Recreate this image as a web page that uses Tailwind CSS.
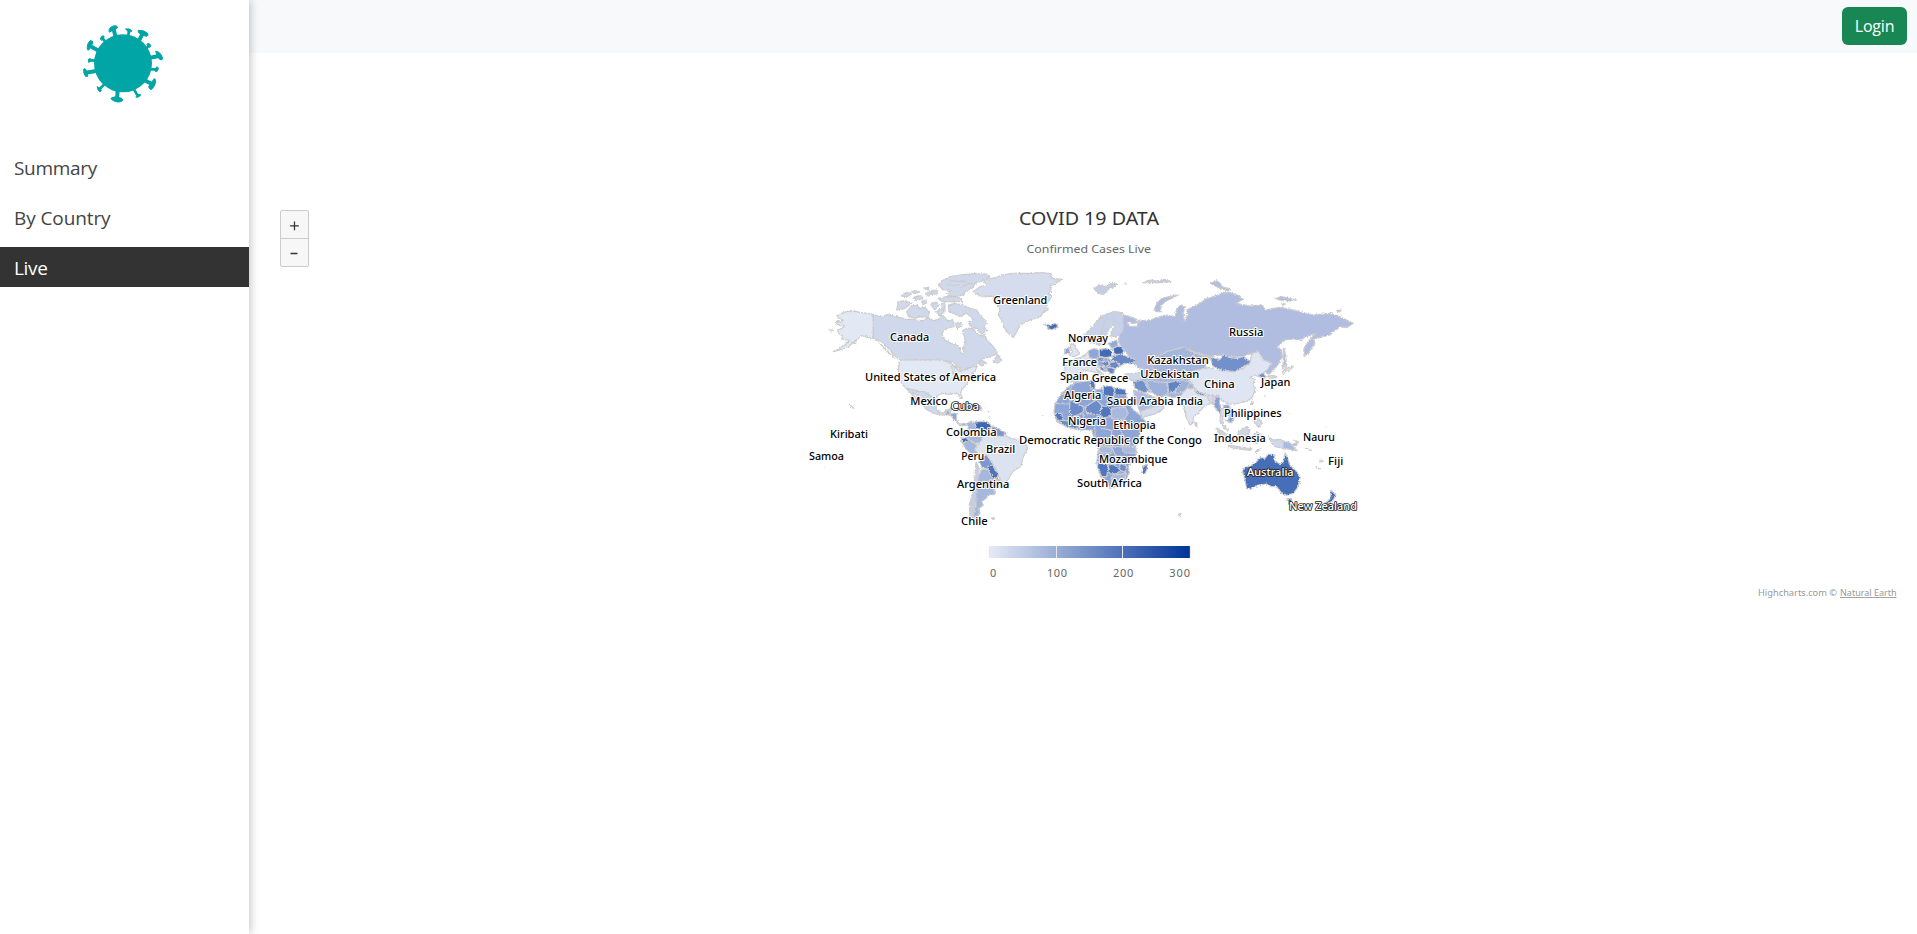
<!DOCTYPE html>
<html lang="en">
<head>
<meta charset="utf-8">
<title>Covid 19 Data</title>
<script src="https://cdn.jsdelivr.net/npm/@tailwindcss/browser@4"></script>
</head>
<body class="bg-white font-['Open_Sans',sans-serif]">
<div class="flex h-[934px] w-full overflow-hidden">
  <aside class="relative z-10 w-[249px] shrink-0 bg-white shadow-[0_0_10px_rgba(0,0,0,0.3)]">
    <div class="flex h-[147px] pt-[22px] pl-[80px]">
      <svg class="h-[84px] w-[86px]" viewBox="240 66 258 252" fill="#02a5a5" stroke="#02a5a5" stroke-linecap="round" stroke-linejoin="round">
        <circle cx="369" cy="190" r="87" stroke="none"/>
        <g fill="none" stroke-width="9">
          <path d="M346 108L341 88M419 118L428 100M292 150L270 138M450 173L477 168M284 214L257 218M438 243L458 253M353 272L351 298" stroke-width="12"/>
          <path d="M385 106L387 90M313 122L307 114M440 144L447 136M290 182L270 181M450 208L470 208M312 254L299 267M403 270L413 287" stroke-width="8"/>
        </g>
        <g stroke-width="3">
          <path d="M327 93Q327 80 344 77Q354 77 352 84Q341 90 329 96ZM415 91Q430 89 442 99Q447 108 439 109Q427 106 417 99ZM262 148Q260 130 271 122Q280 121 279 129Q271 138 267 149ZM468 154Q482 155 488 175Q488 181 480 179Q471 170 468 158ZM253 206Q259 206 259 213Q260 222 264 228Q259 232 255 227Q250 218 251 209ZM464 236Q468 237 466 250Q461 265 453 269Q446 266 446 259Q452 254 457 244ZM334 294Q345 288 356 292Q366 294 369 299Q367 306 352 306Q338 303 334 298Z"/>
          <path d="M378 87Q388 84 395 92Q395 97 388 96Q380 93 378 87ZM301 116Q304 105 312 108Q314 114 306 121ZM441 132Q447 126 452 136Q452 143 447 142ZM266 177Q271 173 274 179Q272 186 267 187ZM470 201Q476 200 475 207Q473 216 467 215ZM292 261Q299 263 304 270Q304 275 299 275Q292 270 292 261ZM408 290Q415 282 421 283Q424 288 413 292Z"/>
        </g>
      </svg>
    </div>
    <nav class="flex flex-col gap-[10px] text-[19px] leading-[42px] text-[#444]">
      <a class="h-10 pl-[14px] tracking-[-0.3px]">Summary</a>
      <a class="h-10 pl-[14px] tracking-[-0.1px]">By Country</a>
      <a class="h-10 bg-[#333] pl-[14px] font-medium tracking-[-0.3px] text-white">Live</a>
    </nav>
  </aside>

  <div class="flex min-w-0 grow flex-col">
    <header class="flex h-[53px] shrink-0 items-start justify-end bg-[#f8f9fb] pt-[7px] pr-[10px]">
      <button class="h-[38px] w-[65px] rounded-md bg-[#198754] text-base tracking-[-0.2px] text-white">Login</button>
    </header>

    <main class="relative flex flex-col items-center pl-[12px] pt-[152px] font-['Noto_Sans',sans-serif]">
      <div class="absolute left-[31px] top-[157px] flex w-[29px] flex-col rounded-[2px] border border-[#ccc] bg-[#f7f7f7]">
        <svg class="h-[28px] w-full border-b border-[#ccc]" viewBox="0 0 27 28"><path d="M9 15.500h9M13.500 11v9" stroke="#333" stroke-width="1.300"/></svg>
        <svg class="h-[27px] w-full" viewBox="0 0 27 27"><path d="M9.500 14.500h7" stroke="#333" stroke-width="1.500"/></svg>
      </div>
      <h1 class="h-[33px] whitespace-nowrap text-[#333]">
        <svg class="h-[33px] w-[260px]" viewBox="0 0 260 33"><text x="60" y="20" font-size="18" fill="#333" textLength="140" lengthAdjust="spacingAndGlyphs">COVID 19 DATA</text></svg>
      </h1>
      <h2><svg class="h-[22px] w-[260px]" viewBox="0 0 260 22"><text x="67.500" y="15" font-size="11.500" fill="#666" textLength="124.500" lengthAdjust="spacingAndGlyphs">Confirmed Cases Live</text></svg></h2>

      <svg class="ml-[-8px] block h-[327px] w-[570px]" viewBox="0 0 1710 981" font-family="'Noto Sans',sans-serif">
        <defs>
          <linearGradient id="scale"><stop offset="0" stop-color="#e6ebf5"/><stop offset="1" stop-color="#003399"/></linearGradient>
          <filter id="coast" x="0" y="0" width="100%" height="100%" color-interpolation-filters="sRGB"><feTurbulence type="fractalNoise" baseFrequency="0.2" numOctaves="2" seed="4"/><feDisplacementMap in="SourceGraphic" scale="9" xChannelSelector="R" yChannelSelector="G"/></filter>
        </defs>
        <g stroke="#ccc" stroke-width="3.500" stroke-linejoin="round" filter="url(#coast)">
          <!-- North America -->
          <path fill="#e2e9f4" d="M220 163L200 160 180 157 155 152 140 155 125 160 112 168 118 176 130 180 125 187 110 184 105 190 120 195 133 197 128 205 112 210 118 222 128 228 125 236 138 240 150 240 135 255 118 265 100 275 125 268 150 257 165 243 180 230 190 226 200 232 220 235ZM88 208l12 4-8 1ZM157 247l12-4-4 9Z"/>
          <path fill="#d0d8ec" d="M220 163L235 168 245 172 262 163 280 168 300 172 315 178 335 178 350 180 370 182 385 172 400 182 415 178 425 164 432 170 445 185 458 178 462 200 445 203 430 212 425 225 435 240 450 248 470 255 480 265 485 282 492 275 490 260 497 245 493 230 487 213 500 205 520 205 530 222 545 228 555 222 560 240 575 255 590 272 592 282 575 288 550 296 535 305 550 303 560 310 545 318 535 310 515 320 500 325 485 335 475 325 465 310 440 303 420 300 300 300 290 292 270 270 255 255 245 243 220 235ZM585 295L595 285 605 300 600 309 580 307ZM232 240l25 30 30 26"/>
          <path fill="#d0d8ec" d="M415 75L430 60 450 50 480 45 520 41 560 42 570 50 550 62 530 68 515 85 495 95 490 105 470 108 450 108 440 100 455 90 430 90ZM440 75l40 0M450 62l50 4M480 85l20-12 30-6M295 125L315 122 335 130 315 145 290 150ZM320 155L335 138 350 135 360 145 375 142 388 158 385 172 360 170 345 175 325 170ZM303 108L320 97 335 102 320 110ZM335 95l20-4 4 6-18 3ZM340 112l20-5 8 8-20 7ZM372 85l14-4-2 10ZM376 100l15-5 5 10-15 4ZM365 125l12-5 4 8-12 6ZM393 92l18-2 0 12-14 0ZM392 132l15-7 9 12-12 13ZM410 155l12-10 10 12-15 10ZM415 115l25-5 40 2 8 12-40 2-25-3ZM445 135L465 130 490 135 510 145 530 150 540 165 562 190 552 200 560 212 545 222 530 205 510 198 505 185 520 178 500 160 480 170 460 160 447 155ZM425 130l10-2 0 25-8-3ZM465 190l15-3 6 10-14 8Z"/>
          <path fill="#e2e9f4" d="M300 300L420 300 440 305 460 315 478 335 500 328 515 320 530 320 525 335 508 345 505 360 500 375 485 388 482 400 487 415 480 415 475 402 460 400 445 403 430 400 415 405 405 415 395 410 375 395 355 395 335 388 318 385 305 370 297 355 295 325ZM455 318l10 5-6 20ZM465 318l15 5-4 10Z"/>
          <path fill="#cfd9ed" d="M318 385L335 388 355 395 375 395 395 410 405 415 410 430 408 445 415 455 430 460 440 450 455 445 450 460 440 466 415 463 395 458 375 445 365 425 345 400 337 398 352 422 340 412 330 397Z"/>
          <path fill="#8fa8d8" d="M436 456l12-4 0 14-10-4ZM450 460l20 0 0 22-10-4ZM470 482l10 12 15-4 5 6-20 2ZM505 440l35-3 6 10-14 2Z"/>
          <path fill="#ccc" d="M148 436l6 2 6 8-5-8ZM72 622l3 1ZM565 455l3 2ZM568 470l2 2Z"/>
          <path fill="#d5dcee" d="M520 95L540 80 560 75 550 60 590 52 605 45 640 40 690 40 730 38 755 42 755 55 785 58 765 72 750 78 755 95 745 100 755 110 740 130 745 150 730 155 722 170 690 180 660 195 650 215 640 233 625 220 610 200 605 180 595 165 600 150 590 120 580 110 540 108Z"/>
          <path fill="#4169b5" d="M730 193L745 193 750 198 765 190 774 197 770 203 755 209 742 206 745 200Z"/>
          <!-- South America -->
          <path fill="#a6b7dd" d="M500 490L515 483 525 490 530 505 545 510 550 530 540 550 520 548 500 535 495 520 505 505ZM498 535L520 545 530 555 525 570 545 575 540 595 520 585 500 570 485 545Z"/>
          <path fill="#dbe3f1" d="M545 540L550 515 575 518 590 512 615 520 620 530 650 540 680 555 683 565 670 590 662 620 640 632 625 658 615 672 600 660 595 645 590 630 575 615 560 595 540 585 525 570Z"/>
          <path fill="#3e66b4" d="M523 487L540 484 560 485 575 497 568 512 550 512 530 505ZM483 536L500 532 503 543 490 550Z"/>
          <path fill="#7d97cf" d="M576 498L592 505 618 518 608 530 590 528 577 520ZM537 590L560 585 572 602 580 615 565 628 555 625 545 622 538 605Z"/>
          <path fill="#a6b7dd" d="M545 628L565 628 590 655 605 665 580 690 587 695 585 703 565 705 560 715 545 725 550 735 538 745 540 760 525 778 518 770 528 740 528 700 530 660ZM600 665L620 672 620 685 600 683Z"/>
          <path fill="#4d74bd" d="M565 618L580 615 585 630 595 640 592 655 577 652 565 632Z"/>
          <path fill="#c6cedf" d="M528 605L538 625 533 660 527 700 525 740 519 766 530 778 510 768 508 735 517 700 525 650ZM574 775l9-2-4 6Z"/>
          <!-- Northern islands and Russia -->
          <path fill="#c3cde6" d="M880 85L900 75 915 80 930 70 950 72 945 80 925 85 920 95 910 103 895 100ZM1030 68l20-8 20 3 25-5 18 6-30 4-25 0ZM975 72l5 0Z"/>
          <path fill="#b0bde0" d="M965 165L985 168 1010 178 1013 188 1000 190 980 186 990 200 1012 198 1017 180 1030 182 1050 180 1080 170 1100 165 1125 170 1130 145 1145 135 1155 140 1150 160 1153 185 1163 165 1160 150 1180 140 1200 130 1215 118 1240 110 1270 98 1290 98 1320 108 1328 118 1310 130 1350 138 1385 135 1397 150 1420 145 1440 142 1470 148 1500 155 1540 165 1590 160 1620 170 1660 190 1640 203 1620 200 1600 215 1590 225 1560 232 1540 238 1545 250 1525 280 1513 290 1512 265 1525 245 1547 220 1530 225 1500 240 1480 237 1455 240 1430 262 1445 270 1447 290 1430 320 1405 345 1395 335 1415 308 1390 300 1375 280 1350 280 1330 290 1290 290 1260 285 1230 290 1180 275 1150 262 1100 275 1060 310 1080 340 1020 340 980 320 1000 300 985 285 970 270 955 245 960 215 970 200ZM1062 150L1070 130 1085 115 1135 104 1110 118 1095 125 1080 142 1085 155 1070 155ZM1230 70L1250 62 1262 72 1265 80 1290 88 1285 93 1260 85ZM1425 115l20-5 45 10-20 3-30-2ZM1610 152l14-2-6 6ZM1445 130l12 2-8 4Z"/>
          <path fill="#dde1ea" d="M1450 265L1455 290 1460 315 1458 325 1450 345 1447 330 1450 300ZM1460 325l20-6-14 15-12-4Z"/>
          <path fill="#b0bde0" d="M1452 265l5 20 2 25-8 10 0-35Z"/>
          <!-- Europe -->
          <path fill="#c7d2ea" d="M855 222L870 208 890 185 905 168 925 160 945 155 968 158 968 168 970 190 968 215 950 230 930 228 935 212 945 202 938 193 925 210 922 228 915 245 900 258 885 250 865 245 852 235ZM905 170L915 185 908 205 898 235M940 165L942 190"/>
          <path fill="#dfe6f2" d="M810 250L825 255 838 283 820 290 808 285 818 275 812 265ZM795 305L850 290 865 275 885 270 900 300 890 330 905 345 880 335 850 330 845 345 830 365 800 362 795 335Z"/>
          <path fill="#8ea6d7" d="M793 268l15-6 0 18-14 2ZM865 273L880 265 897 270 897 290 888 297 868 293Z"/>
          <path fill="#93aada" d="M925 250L950 240 955 260 935 265ZM888 297L910 290 935 300 930 330 915 335 895 320Z"/>
          <path fill="#4169b5" d="M898 268L915 266 935 270 935 290 915 293 898 288ZM940 265L955 258 972 268 968 282 942 283Z"/>
          <path fill="#6a88c8" d="M893 292L913 294 910 303 893 303ZM937 288L960 283 985 290 1007 300 995 312 975 310 962 318 950 305 935 303ZM930 307L950 305 960 320 945 325 930 322ZM905 305l20-2 2 12-15 6ZM898 318l12 4 6 14-14-6ZM918 324l14-2 12 6-2 12-14 0Z"/>
          <path fill="#cfd8eb" d="M975 342L1000 338 1030 342 1030 358 1000 362 975 358ZM890 325L900 335 915 350 905 352ZM1005 320l25 8 20 10-20 4Z"/>
          <path fill="#fff" stroke="none" d="M960 322L978 314 1000 312 1018 325 1022 336 1000 338 975 340 962 335Z"/>
          <!-- Central, South and East Asia -->
          <path fill="#a5b6dd" d="M1100 275L1150 262 1180 278 1230 292 1215 325 1180 340 1190 375 1165 395 1155 410 1115 412 1080 400 1040 395 1020 360 1035 345 1060 340 1055 300Z"/>
          <path fill="#7190cc" d="M1000 365L1030 360 1040 378 1045 395 1030 400 1005 385ZM1100 370L1135 362 1145 368 1125 395 1105 398ZM1130 340L1160 335 1165 350 1135 355Z"/>
          <path fill="#9db1db" d="M1040 360L1065 365 1100 368 1105 400 1080 415 1060 400 1045 385ZM1135 360L1170 365 1155 395 1125 400Z"/>
          <path fill="#6384c6" d="M1103 368L1135 362 1143 370 1124 393 1106 398Z"/>
          <path fill="#aebde0" d="M1000 390L1035 400 1065 412 1092 440 1080 455 1030 470 1020 455 1005 420Z"/>
          <path fill="#d5dcee" d="M1020 455L1060 440 1085 432 1092 445 1070 460 1025 473Z"/>
          <path fill="#dfe5f3" d="M1190 330L1230 322 1250 330 1300 335 1330 325 1350 308 1355 280 1375 275 1390 300 1415 310 1405 325 1390 340 1375 350 1365 345 1350 352 1365 358 1360 370 1365 385 1362 400 1355 415 1335 425 1305 432 1285 432 1270 425 1255 410 1230 405 1190 395 1175 370 1165 360 1170 340Z"/>
          <path fill="#7190cc" d="M1230 292L1260 298 1270 283 1285 292 1310 295 1330 290 1350 303 1350 310 1325 322 1305 335 1265 330 1240 320ZM1375 345L1390 338 1397 350 1390 362 1382 352Z"/>
          <path fill="#e0e5f3" d="M1140 410L1160 385 1185 385 1200 400 1235 412 1255 405 1250 420 1235 430 1215 435 1195 460 1180 472 1178 490 1170 495 1160 475 1150 440Z"/>
          <path fill="#3e66b4" d="M1183 392L1200 398 1215 403 1212 408 1190 400Z"/>
          <path fill="#88a1d5" d="M1250 405L1260 415 1258 430 1265 445 1262 462 1250 450 1240 435ZM1268 435L1285 435 1298 450 1305 470 1292 490 1280 482 1290 470 1280 455Z"/>
          <path fill="#d3dbeb" d="M1222 405L1240 408 1238 432 1225 420ZM1262 445L1278 445 1285 460 1268 470 1270 490 1285 510 1275 508 1260 485ZM1185 485l6 6 0 9-6-4ZM1352 428l6-6 2 10-6 2ZM1360 480l15-8 12 20-8 10-12-8ZM1358 450l12 5 4 15-10-4ZM1385 360l10-3 5 20-6 4ZM1400 350l20-4 12 4-20 8Z"/>
          <path fill="#d0d6e4" d="M1248 502L1270 515 1290 535 1295 550 1275 545 1260 525ZM1315 515L1340 500 1350 510 1340 530 1315 528ZM1285 556l25 3 30 5 15 2-5 5-40-5-25-5ZM1355 530l15-15 15 10-15 25-10-5ZM1368 572l14-6-12 12Z"/>
          <path fill="#d0d8ec" d="M1405 530L1420 540 1435 538 1450 543 1450 565 1425 560 1415 550Z"/>
          <path fill="#a9bae0" d="M1450 543L1470 548 1480 560 1490 572 1475 570 1460 565 1450 566ZM1478 553l18-7-5 9-12 3Z"/>
          <path fill="#ccc" d="M1516 563l18 8-4 0ZM1480 540l14 6ZM1560 598l8 4-4 6ZM1548 620l12 7-8-2ZM1468 463l3-3M1578 500l2 3M1135 763l8-2-4 6ZM1153 505l2 2M1395 408l3 1M730 463l3 2M1084 620l2 2"/>
          <path fill="#476eb8" d="M1330 625L1350 618 1370 605 1380 593 1395 595 1405 582 1425 585 1420 600 1440 612 1450 605 1455 578 1463 595 1470 615 1490 635 1500 652 1495 680 1480 700 1460 706 1445 700 1430 680 1415 680 1400 672 1375 675 1360 683 1340 687 1335 660 1328 635ZM1462 714l14 3-2 14-8 2ZM1592 690L1602 700 1608 706 1598 722 1580 735 1575 730 1592 715Z"/>
          <!-- Africa -->
          <path fill="#8ea6d7" d="M825 367L870 362 885 390 910 385 935 385 975 390 980 415 1000 450 1020 465 1040 488 1020 520 1005 555 1010 575 1005 600 985 618 988 638 980 655 955 678 930 685 915 660 902 650 890 610 895 565 885 545 875 510 835 510 800 500 770 485 762 455 765 430 785 400 805 380Z"/>
          <path fill="#4f76be" d="M870 360l15 3 0 25-12-2ZM910 378L935 378 945 390 940 412 910 405ZM942 383L975 388 980 405 945 405ZM908 438L935 443 930 470 905 475 900 455ZM895 605L920 612 925 620 920 650 905 650 892 620ZM925 615L940 613 960 628 955 640 930 642ZM765 460l20 0 5 25-20-4ZM1030 620L1042 612 1042 625 1035 642 1025 638Z"/>
          <path fill="#6d8ac9" d="M810 420L850 440 850 455 825 470 808 460ZM855 440L890 420 905 435 900 465 860 460ZM770 480L835 485 830 508 800 500ZM960 610l20 8-5 18-15-5Z"/>
          <path fill="#a8b9df" d="M935 445L975 440 985 460 970 480 935 475ZM900 555L935 560 935 580 895 578ZM965 555L1005 560 1008 580 970 578ZM935 645L980 640 970 665 935 682Z"/>
          <path fill="none" d="M885 500L885 545M900 505L935 510 935 545 970 545M960 500L970 540M825 365L810 390 785 405M850 455L850 475M765 430L808 432M895 560H1005M935 560L945 585 965 590M920 612L960 610"/>
        </g>

        <g font-size="31.500" font-weight="500" fill="#000" stroke="#fff" stroke-width="6" stroke-linejoin="round" paint-order="stroke">
          <text x="270" y="243" textLength="118" lengthAdjust="spacingAndGlyphs">Canada</text>
          <text x="580" y="132" textLength="162" lengthAdjust="spacingAndGlyphs">Greenland</text>
          <text x="195" y="363" textLength="393" lengthAdjust="spacingAndGlyphs">United States of America</text>
          <text x="331" y="435" textLength="112" lengthAdjust="spacingAndGlyphs">Mexico</text>
          <text x="90" y="534" textLength="114" lengthAdjust="spacingAndGlyphs">Kiribati</text>
          <text x="27" y="600" textLength="105" lengthAdjust="spacingAndGlyphs">Samoa</text>
          <text x="438" y="528" textLength="152" lengthAdjust="spacingAndGlyphs">Colombia</text>
          <text x="558" y="579" textLength="88" lengthAdjust="spacingAndGlyphs">Brazil</text>
          <text x="484" y="600" textLength="69" lengthAdjust="spacingAndGlyphs">Peru</text>
          <text x="471" y="684" textLength="157" lengthAdjust="spacingAndGlyphs">Argentina</text>
          <text x="483" y="795" textLength="80" lengthAdjust="spacingAndGlyphs">Chile</text>
          <text x="804" y="246" textLength="120" lengthAdjust="spacingAndGlyphs">Norway</text>
          <text x="787" y="318" textLength="104" lengthAdjust="spacingAndGlyphs">France</text>
          <text x="780" y="360" textLength="86" lengthAdjust="spacingAndGlyphs">Spain</text>
          <text x="875" y="366" textLength="110" lengthAdjust="spacingAndGlyphs">Greece</text>
          <text x="792" y="417" textLength="112" lengthAdjust="spacingAndGlyphs">Algeria</text>
          <text x="921" y="435" textLength="200" lengthAdjust="spacingAndGlyphs">Saudi Arabia</text>
          <text x="1130" y="435" textLength="79" lengthAdjust="spacingAndGlyphs">India</text>
          <text x="804" y="495" textLength="114" lengthAdjust="spacingAndGlyphs">Nigeria</text>
          <text x="940" y="507" textLength="127" lengthAdjust="spacingAndGlyphs">Ethiopia</text>
          <text x="657" y="552" textLength="549" lengthAdjust="spacingAndGlyphs">Democratic Republic of the Congo</text>
          <text x="897" y="609" textLength="206" lengthAdjust="spacingAndGlyphs">Mozambique</text>
          <text x="831" y="681" textLength="195" lengthAdjust="spacingAndGlyphs">South Africa</text>
          <text x="1042" y="312" textLength="184" lengthAdjust="spacingAndGlyphs">Kazakhstan</text>
          <text x="1021" y="354" textLength="177" lengthAdjust="spacingAndGlyphs">Uzbekistan</text>
          <text x="1287" y="228" textLength="103" lengthAdjust="spacingAndGlyphs">Russia</text>
          <text x="1212" y="384" textLength="92" lengthAdjust="spacingAndGlyphs">China</text>
          <text x="1383" y="378" textLength="88" lengthAdjust="spacingAndGlyphs">Japan</text>
          <text x="1272" y="471" textLength="173" lengthAdjust="spacingAndGlyphs">Philippines</text>
          <text x="1242" y="546" textLength="155" lengthAdjust="spacingAndGlyphs">Indonesia</text>
          <text x="1509" y="543" textLength="96" lengthAdjust="spacingAndGlyphs">Nauru</text>
          <text x="1584" y="615" textLength="46" lengthAdjust="spacingAndGlyphs">Fiji</text>
          <g fill="#fff" stroke="#222" stroke-width="5">
            <text x="453" y="450" textLength="84" lengthAdjust="spacingAndGlyphs">Cuba</text>
            <text x="1341" y="648" textLength="140" lengthAdjust="spacingAndGlyphs">Australia</text>
            <text x="1467" y="751" textLength="204" lengthAdjust="spacingAndGlyphs">New Zealand</text>
          </g>
        </g>

        <!-- Colour axis -->
        <rect x="567" y="858" width="603" height="36" fill="url(#scale)"/>
        <path d="M769.500 858v36M967.500 858v36M568 858v36M1171 858v36" stroke="#e6e6e6" stroke-width="3"/>
        <g font-size="33" fill="#666">
          <text x="570" y="951" textLength="20">0</text>
          <text x="741" y="951" textLength="60">100</text>
          <text x="939" y="951" textLength="61">200</text>
          <text x="1108" y="951" textLength="62">300</text>
        </g>
      </svg>

      <p class="self-end pr-[20px] leading-none">
        <svg class="block h-[16px] w-[140px] overflow-visible" viewBox="0 0 140 16" font-size="9" fill="#999"><text x="1" y="9" textLength="79" lengthAdjust="spacingAndGlyphs">Highcharts.com ©</text><text x="83" y="9" textLength="56.500" lengthAdjust="spacingAndGlyphs" text-decoration="underline">Natural Earth</text></svg>
      </p>
    </main>
  </div>
</div>
</body>
</html>
